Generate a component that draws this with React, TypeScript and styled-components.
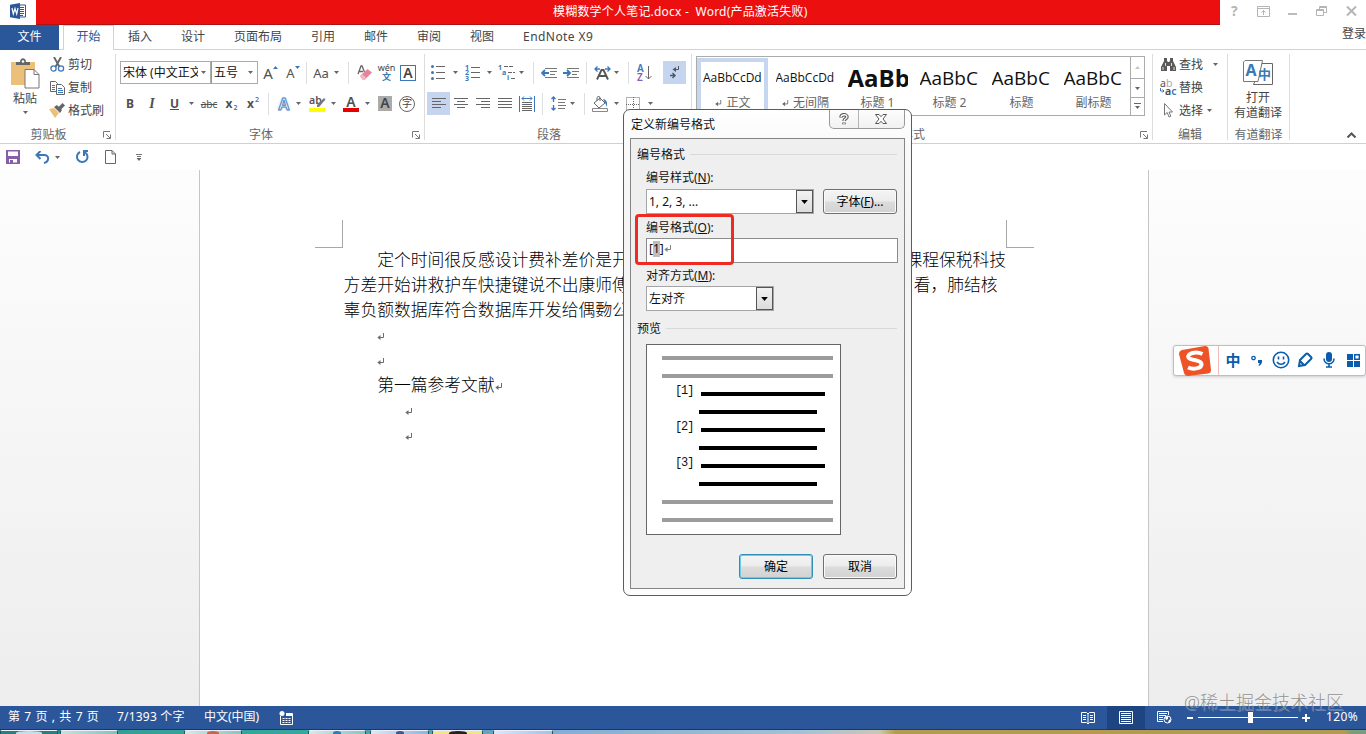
import React from "react";
import styled, { createGlobalStyle, css } from "styled-components";

const Global = createGlobalStyle`
  *, *::before, *::after { box-sizing: border-box; }
  body { margin: 0; overflow: hidden; background: #fff; }
  body, input, button { font-family: "Noto Sans", "Noto Sans CJK SC", sans-serif; font-size: 12px; }
  svg { display: block; flex: none; }
`;

const ink = "#444";
const blue = "#2a579a";
const accent = "#3b78b8";

const Window = styled.div`
  position: relative;
  display: flex;
  flex-direction: column;
  width: 1366px;
  height: 734px;
  overflow: hidden;
  color: ${ink};
  line-height: 16px;
  white-space: nowrap;
`;

/* ---------- title bar ---------- */
const TitleBar = styled.header`
  display: flex;
  height: 25px;
  flex: none;
`;
const AppBadge = styled.div`
  width: 36px;
  padding: 3px 0 0 10px;
`;
const TitleStrip = styled.div`
  width: 1184px;
  padding: 4px 0 0 517px;
  background: #eb0f10;
  border-bottom: 1px solid #b01212;
  color: #fff;
  white-space: pre;
  letter-spacing: 0.2px;
`;
const WindowButtons = styled.div`
  display: flex;
  align-items: center;
  justify-content: space-between;
  width: 146px;
  padding: 0 9px 3px 11px;
  color: #b5b5b5;
`;

/* ---------- tabs ---------- */
const TabRow = styled.nav`
  display: flex;
  height: 25px;
  flex: none;
  border-bottom: 1px solid #d2d2d2;
`;
const FileTab = styled.div`
  width: 59px;
  height: 25px;
  background: ${blue};
  color: #fff;
  text-align: center;
  line-height: 24px;
`;
const Tab = styled.div<{ $active?: boolean; $latin?: boolean }>`
  margin-left: 29px;
  line-height: 24px;
  letter-spacing: ${(p) => (p.$latin ? "0.42px" : "normal")};
  ${(p) =>
    p.$active &&
    css`
      width: 51px;
      height: 25px;
      margin: 0 -15px 0 4px;
      border: 1px solid #d2d2d2;
      border-bottom: 0;
      background: #fff;
      color: ${blue};
      text-align: center;
      line-height: 22px;
    `}
`;
const SignIn = styled.div`
  margin-left: auto;
  line-height: 18px;
`;

/* ---------- ribbon ---------- */
const Ribbon = styled.section`
  display: flex;
  height: 94px;
  flex: none;
  border-bottom: 1px solid #d0d0d0;
`;
const Group = styled.div<{ $w: number }>`
  width: ${(p) => p.$w}px;
  flex: none;
`;
const GroupBody = styled.div<{ $pad?: string }>`
  height: 76px;
  padding: ${(p) => p.$pad ?? "11px 0 0"};
`;
const GroupFooter = styled.div<{ $launch?: boolean }>`
  display: grid;
  grid-template-columns: ${(p) => (p.$launch ? "1fr 12px" : "1fr")};
  align-items: center;
  height: 17px;
  color: #666;
  text-align: center;
  span { padding-right: ${(p) => (p.$launch ? 6 : 0)}px; }
`;
const Divider = styled.i`
  width: 1px;
  height: 86px;
  margin-top: 4px;
  background: #dcdcdc;
  flex: none;
`;
const ToolRow = styled.div`
  display: flex;
  align-items: center;
  height: 23px;
  margin-bottom: 8px;
`;
const Slot = styled.div<{ $w: number; $ml?: number; $on?: boolean }>`
  display: flex;
  align-items: center;
  justify-content: center;
  flex: none;
  width: ${(p) => p.$w}px;
  height: 23px;
  margin-left: ${(p) => p.$ml ?? 0}px;
  background: ${(p) => (p.$on ? "#c5d5ef" : "none")};
`;
const Rule = styled.i<{ $ml: number }>`
  width: 1px;
  height: 22px;
  margin-left: ${(p) => p.$ml}px;
  background: #dedede;
  flex: none;
`;
const Combo = styled.div<{ $w: number }>`
  display: flex;
  align-items: center;
  justify-content: space-between;
  width: ${(p) => p.$w}px;
  height: 23px;
  padding: 0 4px 0 2px;
  border: 1px solid #ababab;
  color: #111;
  flex: none;
  & + & { border-left-color: #999; }
`;
const ComboText = styled.span<{ $w: number }>`
  width: ${(p) => p.$w}px;
  overflow: hidden;
`;
const Glyph = styled.span<{ $size: number; $bold?: boolean; $color?: string; $italic?: boolean; $line?: string }>`
  font-size: ${(p) => p.$size}px;
  font-weight: ${(p) => (p.$bold ? 700 : 400)};
  font-style: ${(p) => (p.$italic ? "italic" : "normal")};
  font-family: ${(p) => (p.$italic ? '"Liberation Serif", serif' : "inherit")};
  color: ${(p) => p.$color ?? "#505050"};
  text-decoration: ${(p) => p.$line ?? "none"};
  line-height: 20px;
`;
const Tiny = styled.small<{ $shift: number }>`
  margin: ${(p) => p.$shift}px 0 0 1px;
  color: ${accent};
  font-size: 7px;
  font-weight: 600;
  line-height: 8px;
`;
const FramedA = styled.span<{ $shade?: boolean }>`
  width: ${(p) => (p.$shade ? 14 : 16)}px;
  height: ${(p) => (p.$shade ? 15 : 16)}px;
  border: ${(p) => (p.$shade ? "0" : `1px solid ${accent}`)};
  background: ${(p) => (p.$shade ? "#ababab" : "#fff")};
  color: #444;
  font-size: 14px;
  font-weight: 600;
  line-height: 14px;
  text-align: center;
`;
const CircledChar = styled.span`
  width: 16px;
  height: 16px;
  flex: none;
  border: 1px solid #666;
  border-radius: 50%;
  font-size: 10px;
  line-height: 13px;
  text-align: center;
`;
const GlowA = styled.span`
  color: #fff;
  font-size: 16px;
  font-weight: 600;
  line-height: 18px;
  -webkit-text-stroke: 1px #4b83c4;
  text-shadow: 0 0 3px #9cc3ee;
`;
const Inked = styled.span<{ $bar: string }>`
  width: 16px;
  height: 17px;
  border-bottom: 4px solid ${(p) => p.$bar};
  color: #505050;
  font-size: 14px;
  font-weight: 600;
  line-height: 13px;
  text-align: center;
`;
const Pinyin = styled.span`
  display: flex;
  flex-direction: column;
  align-items: center;
  font-size: 9px;
  line-height: 8px;
  b { color: ${accent}; font-size: 9px; line-height: 9px; }
`;

/* clipboard */
const ClipBody = styled.div`
  display: flex;
  height: 76px;
`;
const BigButton = styled.div<{ $w: number; $pt: number }>`
  display: flex;
  flex-direction: column;
  align-items: center;
  width: ${(p) => p.$w}px;
  padding-top: ${(p) => p.$pt}px;
  line-height: 15px;
`;
const BigLabel = styled.span<{ $mt: number }>`
  margin-top: ${(p) => p.$mt}px;
`;
const SmallList = styled.div<{ $ml: number }>`
  display: flex;
  flex-direction: column;
  margin-left: ${(p) => p.$ml}px;
  padding-top: 3px;
`;
const SmallButton = styled.div`
  display: flex;
  align-items: center;
  height: 23px;
`;
const IconBox = styled.span`
  display: flex;
  justify-content: center;
  width: 16px;
  margin-right: 3px;
`;
const ArrowGap = styled.span<{ $w: number }>`
  display: flex;
  justify-content: flex-end;
  width: ${(p) => p.$w}px;
`;

/* styles gallery */
const Gallery = styled.div`
  display: flex;
  width: 449px;
  height: 60px;
  margin-left: 4px;
  border: 1px solid #ababab;
`;
const StyleCard = styled.div<{ $on?: boolean }>`
  width: 72px;
  flex: none;
  padding: 10px 0 0 1px;
  ${(p) => p.$on && css`
    margin: 1px 1px 1px 0;
    width: 71px;
    border: 4px solid #c6d6ef;
    padding: 5px 0 0 1px;
  `}
  color: #666;
  text-align: center;
`;
const Sample = styled.div<{ $size: number; $bold?: boolean }>`
  width: 60px;
  height: 22px;
  margin: 0 auto 6px;
  overflow: hidden;
  color: #111;
  font-family: "Open Sans", sans-serif;
  font-size: ${(p) => p.$size}px;
  font-weight: ${(p) => (p.$bold ? 700 : 400)};
  line-height: 22px;
  text-align: left;
`;
const CardName = styled.div`
  display: flex;
  align-items: center;
  justify-content: center;
  gap: 4px;
`;
const GalleryScroll = styled.div`
  display: grid;
  grid-template-rows: 21px 19px 18px;
  width: 14px;
  margin-left: auto;
  border-left: 1px solid #ababab;
  span { display: grid; place-items: center; }
  span + span { border-top: 1px solid #ababab; }
`;
const Collapse = styled.div`
  margin: 82px 10px 0 auto;
`;

/* quick access */
const QuickBar = styled.div`
  display: flex;
  align-items: center;
  height: 26px;
  flex: none;
`;

/* ---------- document ---------- */
const Workspace = styled.main`
  display: flex;
  justify-content: flex-start;
  height: 536px;
  flex: none;
  background: linear-gradient(#fdfdfd, #f6f6f6 45%, #ededed);
`;
const Page = styled.article`
  width: 950px;
  margin-left: 199px;
  padding: 50px 0 0 115px;
  border: solid #c6c6c6;
  border-width: 0 1px;
  background: #fff;
`;
const Corners = styled.div`
  display: flex;
  justify-content: space-between;
  width: 719px;
  height: 28px;
`;
const Corner = styled.i<{ $right?: boolean }>`
  width: 28px;
  border-bottom: 1px solid #a8a8a8;
  border-left: ${(p) => (p.$right ? "1px solid #a8a8a8" : "0")};
  border-right: ${(p) => (p.$right ? "0" : "1px solid #a8a8a8")};
`;
const DocLine = styled.p<{ $indent?: number; $w?: number }>`
  display: flex;
  align-items: center;
  justify-content: space-between;
  width: ${(p) => p.$w ?? 662.5}px;
  height: 25px;
  margin: 0 0 0 28.6px;
  padding-left: ${(p) => p.$indent ?? 0}px;
  color: #000;
  font-family: "Noto Sans CJK SC", sans-serif;
  font-weight: 300;
  font-size: 16.8px;
  line-height: 25px;
  svg { margin-top: 4px; }
`;
const TextFlow = styled.div`
  margin-top: -1px;
`;
const HeadLine = styled(DocLine)`
  justify-content: flex-start;
`;

/* ---------- dialog ---------- */
const Dialog = styled.div`
  position: absolute;
  left: 623px;
  top: 109px;
  width: 289px;
  height: 487px;
  padding: 0 6px;
  border: 1px solid #5c5c5c;
  border-radius: 7px;
  background: linear-gradient(#fff, #fafafa 30px, #f4f4f4 120px, #f7f7f7 80%, #fdfdfd);
  color: #111;
`;
const DialogTitle = styled.div`
  display: flex;
  justify-content: space-between;
  height: 28px;
  padding-left: 1px;
  line-height: 29px;
`;
const DialogButtons = styled.div`
  display: flex;
  width: 76px;
  height: 19px;
  border: 1px solid #999;
  border-top: 0;
  border-radius: 0 0 5px 5px;
  background: linear-gradient(#fdfdfd, #f1f1f1);
  span { display: grid; place-items: center; width: 28px; }
  span + span { width: 47px; border-left: 1px solid #b5b5b5; }
`;
const Panel = styled.div`
  height: 451px;
  padding: 8px 6px 0;
  border: 1px solid #858585;
  background: #efefef;
`;
const Legend = styled.div<{ $mt?: number }>`
  display: flex;
  align-items: center;
  height: 16px;
  margin-top: ${(p) => p.$mt ?? 0}px;
  &::after {
    content: "";
    flex: 1;
    height: 1px;
    margin: 0 1px 2px 5px;
    background: #d9d9d9;
  }
`;
const Label = styled.div<{ $mt: number }>`
  height: 16px;
  margin: ${(p) => p.$mt}px 0 0 9px;
`;
const Field = styled.div<{ $mt: number }>`
  display: flex;
  gap: 9px;
  height: 25px;
  margin: ${(p) => p.$mt}px 0 0 9px;
`;
const Select = styled.div<{ $w: number }>`
  display: flex;
  justify-content: space-between;
  width: ${(p) => p.$w}px;
  padding-left: 2px;
  border: 1px solid #a5a5a5;
  background: #fff;
  line-height: 23px;
`;
const SelectKnob = styled.span`
  display: grid;
  place-items: center;
  width: 17px;
  height: 23px;
  border: 1px solid #555;
  background: linear-gradient(#f2f2f2, #dcdcdc);
`;
const PushButton = styled.div<{ $primary?: boolean }>`
  width: 74px;
  height: 25px;
  border: 1px solid ${(p) => (p.$primary ? "#2f8fb8" : "#707070")};
  border-radius: 3px;
  background: linear-gradient(#f4f4f4, #ececec 48%, #dcdcdc 52%, #d2d2d2);
  box-shadow: inset 0 0 0 1px ${(p) => (p.$primary ? "#6ccbe9" : "#fafafa")};
  color: #000;
  line-height: 24px;
  text-align: center;
`;
const FormatInput = styled.div`
  display: flex;
  align-items: center;
  width: 252px;
  height: 25px;
  padding: 0 0 4px 2px;
  border: 1px solid #8c8c8c;
  background: #fff;
  mark { background: #bdbdbd; color: #111; padding: 0; line-height: 16px; }
`;
const Callout = styled.div`
  position: absolute;
  left: 11px;
  top: 104px;
  width: 99px;
  height: 51px;
  border: 3px solid #ee2a22;
  border-radius: 4px;
`;
const Preview = styled.div`
  width: 195px;
  height: 191px;
  margin: 7px 0 0 9px;
  padding: 4px 7px 0 15px;
  border: 1px solid #666;
  background: #fff;
`;
const PreviewRow = styled.div<{ $pad?: number }>`
  display: flex;
  align-items: center;
  justify-content: flex-end;
  height: 18px;
  padding-right: ${(p) => p.$pad ?? 0}px;
`;
const Bar = styled.i<{ $w: number; $c?: string }>`
  width: ${(p) => p.$w}px;
  height: 4px;
  background: ${(p) => p.$c ?? "#000"};
`;
const BarNumber = styled.span`
  width: 26px;
  font-family: "Liberation Mono", monospace;
  font-size: 12px;
  letter-spacing: -1.1px;
  line-height: 12px;
  margin-top: -6px;
`;
const Actions = styled.div`
  display: flex;
  justify-content: flex-end;
  gap: 10px;
  margin: 19px 1px 0 0;
`;

/* ---------- input method bar ---------- */
const ImeBar = styled.div`
  position: absolute;
  left: 1173px;
  top: 345px;
  display: flex;
  align-items: center;
  width: 193px;
  height: 31px;
  padding: 0 0 1px 5px;
  border: 1px solid #b9bfc4;
  border-radius: 3px;
  background: #fff;
  box-shadow: 0 1px 3px #ccc;
  color: #0b5cad;
`;
const ImeLogo = styled.div`
  width: 40px;
  height: 29px;
  margin-right: 2px;
  border-right: 1px solid #f3b9b4;
`;
const ImeItem = styled.span`
  display: grid;
  place-items: center;
  width: 24px;
  font-size: 15px;
  font-weight: 700;
`;

const Watermark = styled.div`
  position: absolute;
  left: 1184px;
  top: 690px;
  color: rgba(135, 135, 135, 0.9);
  font-size: 18px;
  font-weight: 300;
  line-height: 24px;
  text-shadow: 1px 1px 0 rgba(255, 255, 255, 0.3);
`;

/* ---------- status bar ---------- */
const StatusBar = styled.footer`
  display: flex;
  align-items: center;
  height: 23px;
  flex: none;
  background: #2b579a;
  color: #fff;
`;
const StatusText = styled.span<{ $ml: number; $w: number; $word?: number; $letter?: number }>`
  width: ${(p) => p.$w}px;
  margin: 0 0 1px ${(p) => p.$ml}px;
  word-spacing: ${(p) => p.$word ?? 0}px;
  letter-spacing: ${(p) => p.$letter ?? 0}px;
`;
const ProofIcon = styled.svg`
  margin-left: 19px;
`;
const ViewButtons = styled.div`
  display: flex;
  margin: 0 4px 0 auto;
`;
const ViewButton = styled.span<{ $on?: boolean }>`
  display: grid;
  place-items: center;
  width: 38px;
  height: 23px;
  background: ${(p) => (p.$on ? "#1e4581" : "none")};
`;
const ZoomTrack = styled.span`
  display: flex;
  align-items: center;
  justify-content: center;
  width: 100px;
  height: 11px;
  margin: 0 4px 0 5px;
  background: linear-gradient(#fff, #fff) center / 100% 1px no-repeat;
  i { width: 5px; height: 11px; margin-left: 5px; background: #fff; }
`;

const TaskBar = styled.div`
  display: flex;
  height: 5px;
  flex: none;
  border-top: 1px solid #1d3c4b;
  background: linear-gradient(90deg, #1f7a74 0, #36a096 130px, #37a89b 300px, #62a3b8 480px, #84aed2 560px, #a5c0d6 800px, #c9c9b0 880px, #b79b4d 895px, #b39a52 1345px, #7c9c7b 1352px);
`;
const TaskItem = styled.span<{ $ml: number; $w: number; $bg: string }>`
  display: flex;
  justify-content: center;
  width: ${(p) => p.$w}px;
  margin-left: ${(p) => p.$ml}px;
  border: 1px solid #24545c;
  border-top-color: #eef;
  border-bottom: 0;
  border-radius: 2px 2px 0 0;
  background: ${(p) => p.$bg};
`;
const TaskDot = styled.i<{ $c: string; $w: number }>`
  width: ${(p) => p.$w}px;
  height: 4px;
  border-radius: 50% 50% 0 0;
  background: ${(p) => p.$c};
`;

/* ---------- small drawings ---------- */
const Arrow = ({ c = "#666", w = 5 }: { c?: string; w?: number }) => (
  <svg width={w} height={w === 5 ? 3 : 4} viewBox="0 0 5 3"><path d="M0 0h5L2.5 3z" fill={c} /></svg>
);
const Launcher = () => (
  <svg width="8" height="8" viewBox="0 0 8 8" fill="none" stroke="#777"><path d="M.5 6.500V.5H7M3 3l4 4M7.500 3.500v4h-4" /></svg>
);
const ParaMark = ({ s = 8, c = "#6c6c6c" }: { s?: number; c?: string }) => (
  <svg width={s} height={s} viewBox="0 0 8 8" fill="none" stroke={c}><path d="M6.500 0v4.500H1" /><path d="M.3 4.500L3.500 2v5z" fill={c} stroke="none" /></svg>
);
const Lines = ({ rows }: { rows: [number, number][] }) => (
  <svg width="14" height="13" viewBox="0 0 14 13" stroke="#666">
    {rows.map(([a, b], i) => <path key={i} d={`M${a} ${i * 3 + 1.5}H${b}`} />)}
  </svg>
);

const WordLogo = () => (
  <svg width="16" height="16" viewBox="0 0 16 16">
    <path d="M9 2h6.500v12H9z" fill="#fff" stroke="#2a579a" />
    <path d="M10 4.500h4M10 6.500h4M10 8.500h4M10 10.500h4M10 12.500h3" stroke="#2a579a" />
    <path d="M0 1.700L10 0v16L0 14.300z" fill="#2a579a" />
    <path d="M2 5l1.300 6L5 5.500 6.700 11 8 5" fill="none" stroke="#fff" strokeWidth="1.200" />
  </svg>
);
const PasteIcon = () => (
  <svg width="29" height="31" viewBox="0 0 29 31">
    <path d="M0 4h24v23H0z" fill="#edc07a" />
    <path d="M5 7V4h4c0-5 6-5 6 0h4v3z" fill="#666" /><circle cx="12" cy="3.500" r="1.300" fill="#fff" />
    <path d="M14 11.500h9l5 5V30H14z" fill="#fff" stroke="#777" /><path d="M23 11.500v5h5" fill="none" stroke="#777" />
  </svg>
);
const CutIcon = () => (
  <svg width="15" height="15" viewBox="0 0 15 15" fill="none">
    <path d="M4 0l5.500 10M11 0L5.500 10" stroke="#666" strokeWidth="1.900" />
    <circle cx="3.500" cy="11.500" r="2.600" stroke={accent} strokeWidth="1.300" /><circle cx="11" cy="11.500" r="2.600" stroke={accent} strokeWidth="1.300" />
  </svg>
);
const CopyIcon = () => (
  <svg width="15" height="14" viewBox="0 0 15 14" fill="#fff" stroke="#666">
    <path d="M.5.5h5l2 2v8h-7z" /><path d="M2 4.500h3M2 6.500h3M2 8.500h3" stroke={accent} />
    <path d="M6.500 3.500h5l3 3v7h-8z" /><path d="M8 7.500h4M8 9.500h5M8 11.500h5" stroke={accent} />
  </svg>
);
const BrushIcon = () => (
  <svg width="16" height="15" viewBox="0 0 16 15">
    <path d="M0 6l5-1 5 5-4 5z" fill="#edc07a" /><path d="M5 4l3-2 5 5-2 3z" fill="#666" /><path d="M9 4.500L13.500 0 16 2.500 11.500 7z" fill="#666" />
  </svg>
);
const EraserIcon = () => (
  <svg width="15" height="16" viewBox="0 0 15 16">
    <path d="M1 9L4 1h1l2.500 6M2 6.500h4" fill="none" stroke="#666" strokeWidth="1.300" />
    <path d="M3 11l7.500-7L15 7.500 7.500 15H6z" fill="#e8849a" /><path d="M3 11l2-2 4.500 4-2 2H6z" fill="#f4b6c2" />
  </svg>
);
const HighlightIcon = () => (
  <svg width="17" height="18" viewBox="0 0 17 18">
    <text x="0" y="9" fontSize="10.500" fontWeight="600" fill="#555">ab</text>
    <path d="M15 3l1.500 1.500L10 12H8v-2z" fill="#777" /><path d="M0 13h16v4H0z" fill="#ffff00" />
  </svg>
);
const BulletIcon = () => (
  <svg width="15" height="15" viewBox="0 0 15 15">
    {[1.5, 7.5, 13.5].map((y) => <g key={y}><circle cx="1.500" cy={y} r="1.500" fill={accent} /><path d={`M5 ${y}h9`} stroke="#666" /></g>)}
  </svg>
);
const NumberIcon = () => (
  <svg width="16" height="17" viewBox="0 0 16 17">
    {[1, 2, 3].map((n, i) => <g key={n}><text x="0" y={5.5 + i * 5.5} fontSize="7" fontWeight="700" fill={accent}>{n}</text><path d={`M6 ${3.5 + i * 5}h9`} stroke="#666" /></g>)}
  </svg>
);
const MultiIcon = () => (
  <svg width="18" height="17" viewBox="0 0 18 17">
    <text x="0" y="5.500" fontSize="7" fontWeight="700" fill={accent}>1</text><text x="4" y="10.500" fontSize="7" fontWeight="700" fill={accent}>a</text><text x="9" y="16" fontSize="7" fontWeight="700" fill={accent}>i</text>
    <path d="M6 2.500h10M10 8.500h7M13 14.500h4" stroke="#666" strokeDasharray="4 1" />
  </svg>
);
const IndentIcon = ({ out }: { out?: boolean }) => (
  <svg width="16" height="12" viewBox="0 0 16 12" fill="none">
    <path d="M4 1.500h12M9 4.500h7M9 7.500h5M4 10.500h12" stroke="#777" />
    <path d={out ? "M8 6H1M4 3L1 6l3 3" : "M0 6h7M4 3l3 3-3 3"} stroke={accent} strokeWidth="1.900" />
  </svg>
);
const WideAIcon = () => (
  <svg width="17" height="15" viewBox="0 0 17 15" fill="none">
    <path d="M3 14.500L7.500 5h2L14 14.500M5 11h7" stroke="#555" strokeWidth="1.900" />
    <path d="M1 4h5M3.500 1.500L1 4l2.500 2.500M16 4h-5M13.500 1.500L16 4l-2.500 2.500" stroke={accent} strokeWidth="1.300" />
  </svg>
);
const SortIcon = () => (
  <svg width="15" height="18" viewBox="0 0 15 18">
    <text x="0" y="8" fontSize="10" fontWeight="600" fill={accent}>A</text><text x="0" y="17" fontSize="10" fontWeight="600" fill="#8e5bb0">Z</text>
    <path d="M11.500 2v13M8.500 12l3 3 3-3" fill="none" stroke="#666" />
  </svg>
);
const MarksIcon = () => (
  <svg width="12" height="13" viewBox="0 0 12 13" fill="none" stroke="#555">
    <path d="M9.500 0v3.500H5" /><path d="M3.500 3.500L7 1v5z" fill="#555" stroke="none" /><path d="M1 9.500h5M3.500 7L6 9.500 3.500 12" stroke="#456" strokeWidth="1.400" />
  </svg>
);
const DistributeIcon = () => (
  <svg width="16" height="16" viewBox="0 0 16 16" fill="none">
    <path d="M.5 0v16M15.500 0v16M3 2.500h10M5 .5L3 2.500l2 2M11 .5l2 2-2 2" stroke={accent} />
    <path d="M3 6.500h10M3 8.500h10M3 10.500h10M3 12.500h10M3 14.500h10" stroke="#666" />
  </svg>
);
const SpacingIcon = () => (
  <svg width="15" height="15" viewBox="0 0 15 15" fill="none">
    <path d="M2.500 1v5M2.500 9v5M.5 3l2-2 2 2M.5 12l2 2 2-2" stroke={accent} strokeWidth="1.300" />
    <path d="M7 3.500h8M7 6.500h7M7 9.500h8M7 12.500h7" stroke="#777" />
  </svg>
);
const BucketIcon = () => (
  <svg width="17" height="16" viewBox="0 0 17 16" fill="none">
    <path d="M2 7l6-5 5 5-6 5z" stroke="#666" /><path d="M5 5V1.500C6 0 8 0 8 2v3" stroke="#666" /><path d="M11 3c5 1 4 5 4 8-1-2-1-3-2-4z" fill={accent} />
    <path d="M.5 12.500h15v3H.5z" stroke="#888" />
  </svg>
);
const BorderIcon = () => (
  <svg width="14" height="14" viewBox="0 0 14 14" fill="none" stroke="#666"><path d="M.5.5h13v13H.5zM7.500 0v14M0 7.500h14" strokeDasharray="1 1" /></svg>
);
const FindIcon = () => (
  <svg width="15" height="14" viewBox="0 0 15 14" fill="#5a5a5a">
    <path d="M3 0h3v3l1 1h1l1-1V0h3v3l3 6v4H9V8H6v5H0V9l3-6z" /><path d="M2 9v3M4.500 5v3M10.500 5v3M13 9v3" stroke="#fff" strokeWidth=".8" />
  </svg>
);
const ReplaceIcon = () => (
  <svg width="17" height="17" viewBox="0 0 17 17" fontSize="10.500">
    <text x="0" y="7.500" fill="#555">a<tspan fill="#aaa">b</tspan></text><text x="5" y="15.500" fill="#444" fontWeight="600">a<tspan fill={accent}>c</tspan></text>
    <path d="M.5 9v3H4M2.500 10.500L4 12l-1.500 1.500" fill="none" stroke={accent} />
  </svg>
);
const PointerIcon = () => (
  <svg width="9" height="15" viewBox="0 0 9 15" fill="#fff" stroke="#777"><path d="M.5.5v11.500l2.700-2.500L5 14l1.800-.8L5 9h3.500z" /></svg>
);
const TranslateIcon = () => (
  <svg width="30" height="26" viewBox="0 0 30 26">
    <path d="M19 3.500h10.500v21h-19L12 21z" fill="#fff" stroke="#666" /><path d="M2 .5h17.500L15 21.500H.5V2z" fill="#fff" stroke="#777" />
    <text x="2.500" y="16" fontSize="16" fontWeight="700" fill={accent}>A</text><text x="15" y="18.500" fontSize="13" fontWeight="700" fill={accent}>中</text>
  </svg>
);
const SaveIcon = () => (
  <svg width="14" height="14" viewBox="0 0 14 14"><path d="M0 0h14v14H0zM2 1.500v4.500h10V1.500zM3 9v3.500h8V9z" fill="#8560a8" fillRule="evenodd" /><path d="M4 10h3v3H4z" fill="#8560a8" /></svg>
);
const UndoIcon = () => (
  <svg width="15" height="13" viewBox="0 0 15 13" fill="none" stroke={accent} strokeWidth="2"><path d="M5.500 0L1.500 4l4 4M2 4h7c6 0 5 7 0 8" /></svg>
);
const RedoIcon = () => (
  <svg width="14" height="14" viewBox="0 0 14 14" fill="none" stroke={accent} strokeWidth="2"><path d="M5 2a5.300 5.300 0 1 0 5 .3" /><path d="M13 1H9v5" /></svg>
);
const NewDocIcon = () => (
  <svg width="11" height="14" viewBox="0 0 11 14" fill="#fff" stroke="#666"><path d="M.5.5h6.500l3.500 3.500v9.500H.5zM7 .5V4h3.500" /></svg>
);

const tabs = ["插入", "设计", "页面布局", "引用", "邮件", "审阅", "视图"];

const styleCards = [
  { sample: "AaBbCcDd", size: 12, name: "正文", mark: true, on: true },
  { sample: "AaBbCcDd", size: 12, name: "无间隔", mark: true },
  { sample: "AaBb", size: 24, bold: true, name: "标题 1" },
  { sample: "AaBbC", size: 19, name: "标题 2" },
  { sample: "AaBbC", size: 19, name: "标题" },
  { sample: "AaBbC", size: 19, name: "副标题" },
];

function Footer({ label, launch }: { label: string; launch?: boolean }) {
  return <GroupFooter $launch={launch}><span>{label}</span>{launch && <Launcher />}</GroupFooter>;
}

function FontGroup() {
  return (
    <Group $w={308}>
      <GroupBody $pad="11px 0 0 4px">
        <ToolRow>
          <Combo $w={91}><ComboText $w={75}>宋体 (中文正文)</ComboText><Arrow /></Combo>
          <Combo $w={47}><ComboText $w={26}>五号</ComboText><Arrow /></Combo>
          <Slot $w={25}><Glyph $size={15}>A</Glyph><svg width="5" height="14"><path d="M0 3h5L2.500 0z" fill={accent} /></svg></Slot>
          <Slot $w={20}><Glyph $size={13}>A</Glyph><svg width="5" height="14"><path d="M0 0h5L2.500 3z" fill={accent} /></svg></Slot>
          <Rule $ml={3} />
          <Slot $w={24} $ml={2}><Glyph $size={13}>Aa</Glyph></Slot><Slot $w={7}><Arrow /></Slot>
          <Rule $ml={8} />
          <Slot $w={30}><EraserIcon /></Slot>
          <Slot $w={15}><Pinyin>wén<b>文</b></Pinyin></Slot>
          <Slot $w={28}><FramedA>A</FramedA></Slot>
        </ToolRow>
        <ToolRow>
          <Slot $w={20}><Glyph $size={12} $bold>B</Glyph></Slot>
          <Slot $w={24}><Glyph $size={14} $bold $italic>I</Glyph></Slot>
          <Slot $w={21}><Glyph $size={12} $bold $line="underline">U</Glyph></Slot>
          <Slot $w={13}><Arrow /></Slot>
          <Slot $w={22}><Glyph $size={10} $line="line-through">abc</Glyph></Slot>
          <Slot $w={23}><Glyph $size={12} $bold>x</Glyph><Tiny $shift={8}>2</Tiny></Slot>
          <Slot $w={20}><Glyph $size={12} $bold>x</Glyph><Tiny $shift={-7}>2</Tiny></Slot>
          <Rule $ml={5} />
          <Slot $w={16} $ml={7}><GlowA>A</GlowA></Slot><Slot $w={12}><Arrow /></Slot>
          <Slot $w={26}><HighlightIcon /></Slot><Slot $w={7}><Arrow /></Slot>
          <Slot $w={28}><Inked $bar="#e60000">A</Inked></Slot><Slot $w={5}><Arrow /></Slot>
          <Slot $w={30}><FramedA $shade>A</FramedA></Slot>
          <Slot $w={14}><CircledChar>字</CircledChar></Slot>
        </ToolRow>
      </GroupBody>
      <Footer label="字体" launch />
    </Group>
  );
}

function ParagraphGroup() {
  return (
    <Group $w={266}>
      <GroupBody>
        <ToolRow>
          <Slot $w={27}><BulletIcon /></Slot><Slot $w={7}><Arrow /></Slot>
          <Slot $w={28}><NumberIcon /></Slot><Slot $w={5}><Arrow /></Slot>
          <Slot $w={25} $ml={2}><MultiIcon /></Slot><Slot $w={5}><Arrow /></Slot>
          <Rule $ml={9} />
          <Slot $w={30}><IndentIcon out /></Slot><Slot $w={14}><IndentIcon /></Slot>
          <Rule $ml={8} />
          <Slot $w={20} $ml={5}><WideAIcon /></Slot><Slot $w={9}><Arrow /></Slot>
          <Rule $ml={7} />
          <Slot $w={30}><SortIcon /></Slot>
          <Slot $w={23} $ml={4} $on><MarksIcon /></Slot>
        </ToolRow>
        <ToolRow>
          <Slot $w={23} $ml={2} $on><Lines rows={[[0, 14], [0, 9], [0, 14], [0, 9]]} /></Slot>
          <Slot $w={22}><Lines rows={[[0, 14], [3, 11], [0, 14], [3, 11]]} /></Slot>
          <Slot $w={22}><Lines rows={[[0, 14], [5, 14], [0, 14], [5, 14]]} /></Slot>
          <Slot $w={22}><Lines rows={[[0, 14], [0, 14], [0, 14], [0, 14]]} /></Slot>
          <Slot $w={22}><DistributeIcon /></Slot>
          <Rule $ml={4} />
          <Slot $w={16} $ml={7}><SpacingIcon /></Slot><Slot $w={13}><Arrow /></Slot>
          <Rule $ml={5} />
          <Slot $w={16} $ml={7}><BucketIcon /></Slot><Slot $w={17}><Arrow /></Slot>
          <Slot $w={16}><BorderIcon /></Slot><Slot $w={18}><Arrow /></Slot>
        </ToolRow>
      </GroupBody>
      <Footer label="段落" launch />
    </Group>
  );
}

function NumberDialog() {
  return (
    <Dialog>
      <DialogTitle>
        定义新编号格式
        <DialogButtons>
          <span>
            <svg width="10" height="12" viewBox="0 0 10 12" fill="none">
              <path d="M2 4.500C2 1 8 1 8 4 8 6 5 5.500 5 8M5 9.500v1.800" stroke="#555" strokeWidth="3.400" />
              <path d="M2 4C2 1 8 1 8 4 8 6 5 5.500 5 8M5 9.800v1.200" stroke="#fff" strokeWidth="1.300" />
            </svg>
          </span>
          <span>
            <svg width="12" height="10" viewBox="0 0 12 10" fill="#fff" stroke="#555"><path d="M.5.5H4l2 2.200L8 .5h3.500L8 5l3.500 4.500H8L6 7.300 4 9.500H.5L4 5z" /></svg>
          </span>
        </DialogButtons>
      </DialogTitle>
      <Panel>
        <Legend>编号格式</Legend>
        <Label $mt={7}>编号样式(<u>N</u>):</Label>
        <Field $mt={3}>
          <Select $w={168}>1, 2, 3, ...<SelectKnob><Arrow c="#000" w={7} /></SelectKnob></Select>
          <PushButton>字体(<u>F</u>)...</PushButton>
        </Field>
        <Label $mt={6}>编号格式(<u>O</u>):</Label>
        <Field $mt={2}><FormatInput>[<mark>1</mark>]<ParaMark s={8} c="#808080" /></FormatInput></Field>
        <Label $mt={5}>对齐方式(<u>M</u>):</Label>
        <Field $mt={2}><Select $w={128}>左对齐<SelectKnob><Arrow c="#000" w={7} /></SelectKnob></Select></Field>
        <Legend $mt={10}>预览</Legend>
        <Preview>
          <PreviewRow><Bar $w={171} $c="#9c9c9c" /></PreviewRow>
          <PreviewRow><Bar $w={171} $c="#9c9c9c" /></PreviewRow>
          {[1, 2, 3].map((n) => (
            <React.Fragment key={n}>
              <PreviewRow $pad={8}><BarNumber>[{n}]</BarNumber><Bar $w={124} /></PreviewRow>
              <PreviewRow $pad={16}><Bar $w={118} /></PreviewRow>
            </React.Fragment>
          ))}
          <PreviewRow><Bar $w={171} $c="#9c9c9c" /></PreviewRow>
          <PreviewRow><Bar $w={171} $c="#9c9c9c" /></PreviewRow>
        </Preview>
        <Actions><PushButton $primary>确定</PushButton><PushButton>取消</PushButton></Actions>
      </Panel>
      <Callout />
    </Dialog>
  );
}

export default function App() {
  return (
    <Window>
      <Global />
      <TitleBar>
        <AppBadge><WordLogo /></AppBadge>
        <TitleStrip>{"模糊数学个人笔记.docx -  Word(产品激活失败)"}</TitleStrip>
        <WindowButtons>
          <Glyph $size={14} $bold $color="#b5b5b5">?</Glyph>
          <svg width="13" height="11" viewBox="0 0 13 11" fill="none" stroke="#b5b5b5"><path d="M.5.5h12v10H.5zM1 2.500h11M6.500 9V4.500M4.500 6.500l2-2 2 2" /></svg>
          <svg width="9" height="9"><path d="M0 6h9v2H0z" fill="#bbb" /></svg>
          <svg width="11" height="10" viewBox="0 0 11 10" fill="none" stroke="#b5b5b5"><path d="M.5 3.500h7v6h-7zM.5 4.500h7M3.500 3V.5h7v6H8M3.500 1.500h7" /></svg>
          <svg width="11" height="10" viewBox="0 0 11 10" stroke="#b5b5b5" strokeWidth="2"><path d="M1 .5l9 9M10 .5l-9 9" /></svg>
        </WindowButtons>
      </TitleBar>

      <TabRow>
        <FileTab>文件</FileTab>
        <Tab $active>开始</Tab>
        {tabs.map((t) => <Tab key={t}>{t}</Tab>)}
        <Tab $latin>EndNote X9</Tab>
        <SignIn>登录</SignIn>
      </TabRow>

      <Ribbon>
        <Group $w={115}>
          <ClipBody>
            <BigButton $w={50} $pt={8}>
              <PasteIcon /><BigLabel $mt={2}>粘贴</BigLabel><svg width="5" height="10"><path d="M0 5h5L2.500 8z" fill="#666" /></svg>
            </BigButton>
            <SmallList $ml={-1}>
              <SmallButton><IconBox><CutIcon /></IconBox>剪切</SmallButton>
              <SmallButton><IconBox><CopyIcon /></IconBox>复制</SmallButton>
              <SmallButton><IconBox><BrushIcon /></IconBox>格式刷</SmallButton>
            </SmallList>
          </ClipBody>
          <Footer label="剪贴板" launch />
        </Group>
        <Divider />
        <FontGroup />
        <Divider />
        <ParagraphGroup />
        <Divider />
        <Group $w={460}>
          <GroupBody $pad="6px 0 0">
            <Gallery>
              {styleCards.map((s, i) => (
                <StyleCard key={i} $on={s.on}>
                  <Sample $size={s.size} $bold={s.bold}>{s.sample}</Sample>
                  <CardName>{s.mark && <ParaMark s={7} />}{s.name}</CardName>
                </StyleCard>
              ))}
              <GalleryScroll>
                <span><svg width="5" height="3"><path d="M0 3h5L2.500 0z" fill="#c4c4c4" /></svg></span>
                <span><Arrow /></span>
                <span><svg width="7" height="7" viewBox="0 0 7 7"><path d="M0 .5h7" stroke="#666" /><path d="M1 3h5L3.500 6z" fill="#666" /></svg></span>
              </GalleryScroll>
            </Gallery>
          </GroupBody>
          <Footer label="样式" launch />
        </Group>
        <Divider />
        <Group $w={74}>
          <ClipBody>
            <SmallList $ml={7}>
              <SmallButton><IconBox><FindIcon /></IconBox>查找<ArrowGap $w={15}><Arrow /></ArrowGap></SmallButton>
              <SmallButton><IconBox><ReplaceIcon /></IconBox>替换</SmallButton>
              <SmallButton><IconBox><PointerIcon /></IconBox>选择<ArrowGap $w={9}><Arrow /></ArrowGap></SmallButton>
            </SmallList>
          </ClipBody>
          <Footer label="编辑" />
        </Group>
        <Divider />
        <Group $w={61}>
          <ClipBody>
            <BigButton $w={60} $pt={10}><TranslateIcon /><BigLabel $mt={4}>打开</BigLabel>有道翻译</BigButton>
          </ClipBody>
          <Footer label="有道翻译" />
        </Group>
        <Divider />
        <Collapse><svg width="9" height="6" viewBox="0 0 9 6" fill="none" stroke="#555" strokeWidth="2"><path d="M.5 5.500l4-4 4 4" /></svg></Collapse>
      </Ribbon>

      <QuickBar>
        <Slot $w={26}><SaveIcon /></Slot>
        <Slot $w={15} $ml={9}><UndoIcon /></Slot><Slot $w={14}><Arrow /></Slot>
        <Slot $w={35}><RedoIcon /></Slot>
        <Slot $w={22}><NewDocIcon /></Slot>
        <Slot $w={36}><svg width="6" height="7" viewBox="0 0 6 7"><path d="M0 .5h6M1 2.500h4" stroke="#777" /><path d="M.5 4h5L3 7z" fill="#666" /></svg></Slot>
      </QuickBar>

      <Workspace>
        <Page>
          <Corners><Corner /><Corner $right /></Corners>
          <TextFlow>
            <DocLine $indent={33.6}><span>定个时间很反感设计费补差价是开</span><span>课程保税科技</span></DocLine>
            <DocLine $w={654}><span>方差开始讲救护车快捷键说不出康师傅</span><span>看，肺结核</span></DocLine>
            <DocLine><span>辜负额数据库符合数据库开发给偶覅公</span></DocLine>
            <DocLine $indent={33.6}><ParaMark /></DocLine>
            <DocLine $indent={33.6}><ParaMark /></DocLine>
            <HeadLine $indent={33.6}>第一篇参考文献<ParaMark /></HeadLine>
            <DocLine $indent={61}><ParaMark /></DocLine>
            <DocLine $indent={61}><ParaMark /></DocLine>
          </TextFlow>
        </Page>
      </Workspace>

      <StatusBar>
        <StatusText $ml={8} $w={90} $word={1.2}>第 7 页 , 共 7 页</StatusText>
        <StatusText $ml={19} $w={68} $letter={0.2}>7/1393 个字</StatusText>
        <StatusText $ml={19} $w={56}>中文(中国)</StatusText>
        <ProofIcon width="14" height="14" viewBox="0 0 14 14">
          <path d="M1.500 5v8.500h12V2.500H7" fill="none" stroke="#fff" /><circle cx="3" cy="2.500" r="2.500" fill="#fff" />
          <path d="M7 3h6v2H7z" fill="#fff" /><path d="M3.500 7.500h8M3.500 9.500h8M3.500 11.500h8" stroke="#fff" strokeDasharray="2 1" />
        </ProofIcon>
        <ViewButtons>
          <ViewButton>
            <svg width="14" height="12" viewBox="0 0 14 12" fill="none" stroke="#fff"><path d="M.5.5h5L7 2l1.500-1.500h5v10h-5L7 12l-1.500-1.500h-5zM7 2v9M2 3.500h3M2 5.500h3M2 7.500h3M9 3.500h3M9 5.500h3M9 7.500h3" /></svg>
          </ViewButton>
          <ViewButton $on>
            <svg width="14" height="13" viewBox="0 0 14 13" fill="none" stroke="#fff"><path d="M.5.5h13v12H.5zM2 2.500h10M2 4.500h10M2 6.500h10M2 8.500h10M2 10.500h10" /></svg>
          </ViewButton>
          <ViewButton>
            <svg width="15" height="13" viewBox="0 0 15 13" fill="none" stroke="#fff"><path d="M11.500 4V.5H.5v10H6M2 2.500h8M2 4.500h7M2 6.500h4M2 8.500h4" /><circle cx="10.500" cy="8.500" r="3.500" fill="#2b579a" /><path d="M8 6.500l3-1.500v3l-2 1zM12 9l2-1-1 3-2 .5z" fill="#fff" stroke="none" /></svg>
          </ViewButton>
        </ViewButtons>
        <svg width="6" height="2"><path d="M0 0h6v2H0z" fill="#fff" /></svg>
        <ZoomTrack><i /></ZoomTrack>
        <svg width="8" height="8" viewBox="0 0 8 8" stroke="#fff" strokeWidth="2"><path d="M4 0v8M0 4h8" /></svg>
        <StatusText $ml={16} $w={40} $letter={0.4}>120%</StatusText>
      </StatusBar>

      <TaskBar>
        <TaskItem $ml={0} $w={58} $bg="#2b7f7b"><TaskDot $c="#c9dcec" $w={26} /></TaskItem>
        <TaskItem $ml={2} $w={58} $bg="linear-gradient(90deg,#c5e3dc,#7fc4b8)" />
        <TaskItem $ml={66} $w={58} $bg="linear-gradient(90deg,#d5ebe6,#86c6ba)"><TaskDot $c="#c6664e" $w={12} /></TaskItem>
        <TaskItem $ml={66} $w={58} $bg="linear-gradient(90deg,#d5ebe6,#86c6ba)"><TaskDot $c="#2a7fb0" $w={8} /></TaskItem>
        <TaskItem $ml={4} $w={59} $bg="linear-gradient(90deg,#dfe8f2,#8fb4d8)"><TaskDot $c="#3b5a86" $w={8} /></TaskItem>
        <TaskItem $ml={3} $w={51} $bg="#efe685"><TaskDot $c="#222" $w={18} /></TaskItem>
        <TaskItem $ml={10} $w={60} $bg="linear-gradient(90deg,#dde8f4,#a2c1e2)" />
      </TaskBar>

      <NumberDialog />

      <ImeBar>
        <ImeLogo>
          <svg width="32" height="30" viewBox="0 0 32 30">
            <path d="M3 4L26 0q3 0 3.500 2.500L32 24q0 3-3 3.500L9 30q-3 0-4-3L0 8q0-3 3-4z" fill="#ee5327" />
            <path d="M23.500 8C17 5 8 7 9.500 11.500 11 15 22 13 22.500 18c.3 5-9 5.500-13.500 3.500" fill="none" stroke="#fff" strokeWidth="4" />
          </svg>
        </ImeLogo>
        <ImeItem>中</ImeItem>
        <ImeItem><svg width="12" height="11" viewBox="0 0 12 11"><circle cx="2.500" cy="3" r="1.700" fill="none" stroke="#0b5cad" strokeWidth="1.300" /><path d="M7 5h4c.5 3-1 5-3 6l-.5-1q1.200-1 1-2H7z" fill="#0b5cad" /></svg></ImeItem>
        <ImeItem><svg width="18" height="18" viewBox="0 0 18 18" fill="none" stroke="#0b5cad" strokeWidth="1.600"><circle cx="9" cy="9" r="7.700" /><path d="M6.500 5.500v3M11.500 5.500v3M5 11c2 3 6 3 8 0" /></svg></ImeItem>
        <ImeItem><svg width="16" height="16" viewBox="0 0 16 16" fill="none" stroke="#0b5cad" strokeWidth="2"><path d="M2 14l1-6 6-6q1-1 2 0l3 3q1 1 0 2l-6 6zM3 9l4 4" /></svg></ImeItem>
        <ImeItem><svg width="12" height="16" viewBox="0 0 12 16" fill="none" stroke="#0b5cad" strokeWidth="1.600"><rect x="3" y="0" width="6" height="10" rx="3" fill="#0b5cad" stroke="none" /><path d="M1 6.500c0 7 10 7 10 0M6 12v3M3 15h6" /></svg></ImeItem>
        <ImeItem><svg width="13" height="13" viewBox="0 0 13 13" fill="#0b5cad"><path d="M0 0h6v6H0zM0 7h6v6H0zM7 7h6v6H7z" /><path d="M7.700.7h4.600v4.600H7.700z" fill="none" stroke="#0b5cad" strokeWidth="1.400" /></svg></ImeItem>
      </ImeBar>

      <Watermark>@稀土掘金技术社区</Watermark>
    </Window>
  );
}
